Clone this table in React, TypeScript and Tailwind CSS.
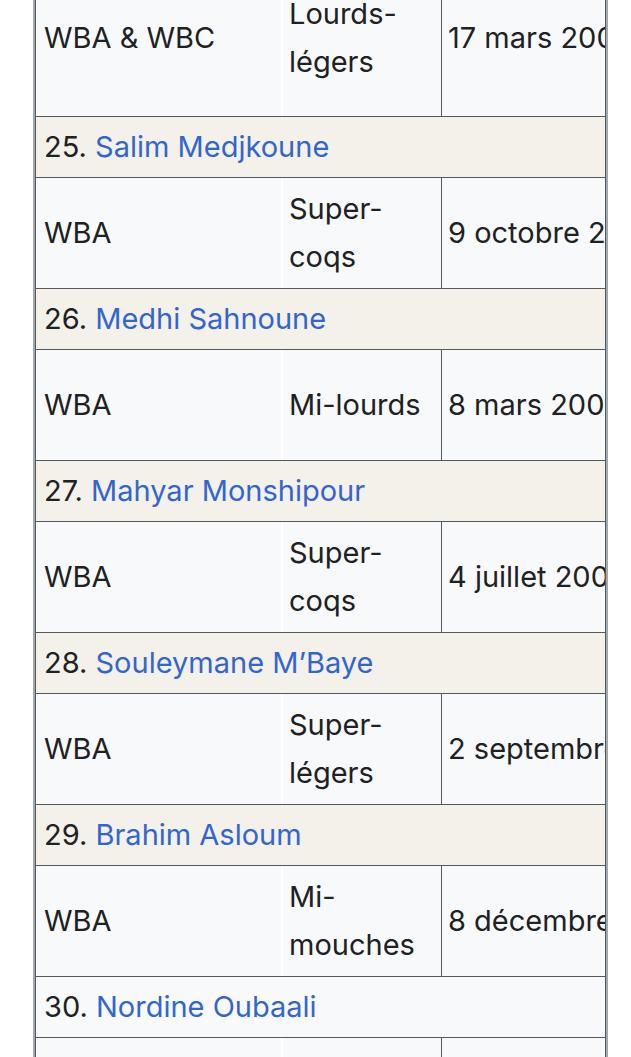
import React from 'react';

type Row = {
  rank: number;
  name: string;
  org: string;
  weight: string;
  date: string;
};

const rows: Row[] = [
  { rank: 25, name: 'Salim Medjkoune', org: 'WBA', weight: 'Super-coqs', date: '9 octobre 2005' },
  { rank: 26, name: 'Medhi Sahnoune', org: 'WBA', weight: 'Mi-lourds', date: '8 mars 2003' },
  { rank: 27, name: 'Mahyar Monshipour', org: 'WBA', weight: 'Super-coqs', date: '4 juillet 2003' },
  { rank: 28, name: 'Souleymane M\u2019Baye', org: 'WBA', weight: 'Super-légers', date: '2 septembre 2006' },
  { rank: 29, name: 'Brahim Asloum', org: 'WBA', weight: 'Mi-mouches', date: '8 décembre 2007' },
];

function DataRow({ org, weight, date, tall }: { org: string; weight: string; date: string; tall?: boolean }) {
  return (
    <div className={`flex bg-[#f8f9fb] border-b border-[#54595d] ${tall ? 'h-[157px]' : 'h-[111px]'}`}>
      <div className="w-[247px] shrink-0 flex items-center px-[8px] border-r-2 border-white">{org}</div>
      <div className="w-[159px] shrink-0 flex items-center px-[6px] border-r border-[#54595d]">{weight}</div>
      <div className="flex-1 flex items-center px-[6px] whitespace-nowrap">{date}</div>
    </div>
  );
}

function HeaderRow({ rank, name, plain }: { rank: number; name: string; plain?: boolean }) {
  return (
    <div className={`h-[61px] flex items-center px-[8px] border-b border-[#54595d] ${plain ? 'bg-[#f8f9fb]' : 'bg-[#f4f0ea]'}`}>
      <span>{rank}.&nbsp;</span>
      <a className="text-[#3366cc]">{name}</a>
    </div>
  );
}

export default function App() {
  return (
    <div className="w-[631px] h-[1057px] overflow-hidden bg-white font-['Inter',sans-serif] text-[29px] leading-[48px] text-[#202122]">
      <div className="ml-[33px] w-[575px] -mt-[40px] border-x-2 border-[#a2a9b1] overflow-hidden">
        <div className="border-x border-[#54595d] overflow-hidden">
          <DataRow org="WBA & WBC" weight="Lourds-légers" date="17 mars 2007" tall />
          {rows.map((r) => (
            <React.Fragment key={r.rank}>
              <HeaderRow rank={r.rank} name={r.name} />
              <DataRow org={r.org} weight={r.weight} date={r.date} />
            </React.Fragment>
          ))}
          <HeaderRow rank={30} name="Nordine Oubaali" plain />
          <DataRow org="WBA" weight="Coqs" date="27 juillet 2019" />
        </div>
      </div>
    </div>
  );
}
